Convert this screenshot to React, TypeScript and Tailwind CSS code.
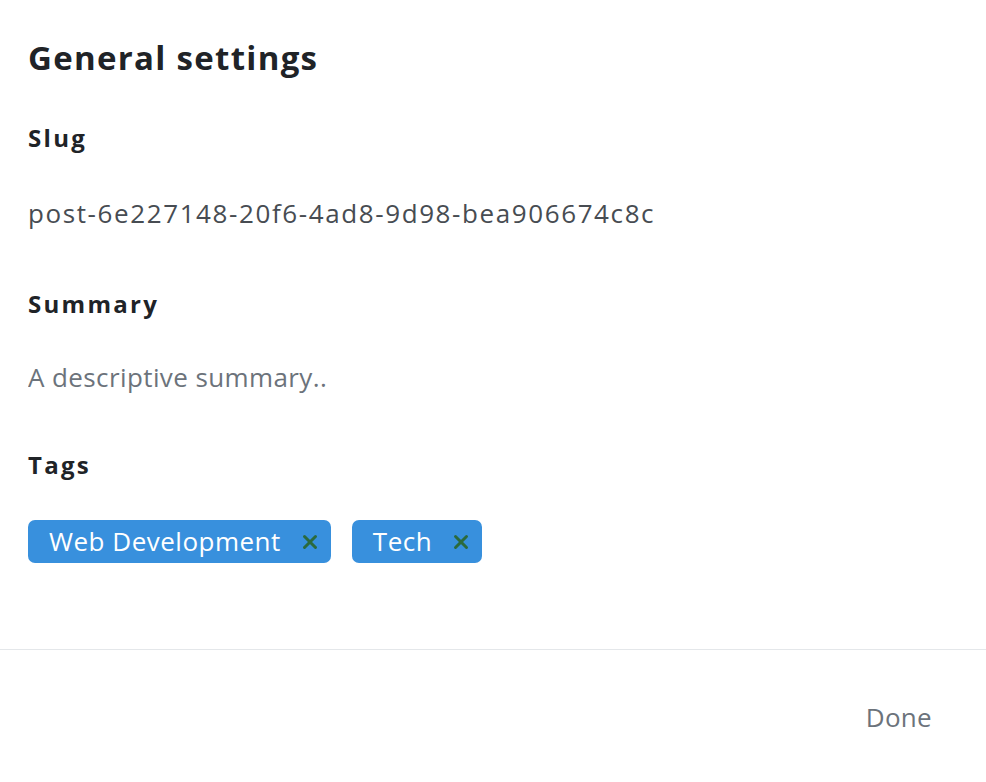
import { X } from "lucide-react";

const tags = ["Web Development", "Tech"];

const Label = ({ children, className }: { children: string; className: string }) => (
  <h3 className={`text-[24px] leading-[32px] font-bold tracking-[2.3px] text-[#202327] ${className}`}>
    {children}
  </h3>
);

const App = () => {
  return (
    <div className="w-full min-h-screen bg-white font-['Open_Sans',sans-serif]">
      <div className="px-[28px] pt-[38px]">
        <h1 className="text-[33px] leading-[40px] font-bold tracking-[1.3px] text-[#202327]">
          General settings
        </h1>

        <Label className="mt-[44px]">Slug</Label>
        <p className="mt-[43px] text-[26px] leading-[32px] tracking-[1.6px] text-[#474c52]">
          post-6e227148-20f6-4ad8-9d98-bea906674c8c
        </p>

        <Label className="mt-[59px]">Summary</Label>
        <input
          type="text"
          placeholder="A descriptive summary.."
          className="mt-[41px] block w-full h-[32px] text-[26px] leading-[32px] tracking-[0.4px] outline-none placeholder:text-[#6c737b]"
        />

        <Label className="mt-[56px]">Tags</Label>
        <div className="mt-[39px] flex gap-[21px]">
          {tags.map((tag) => (
            <span
              key={tag}
              className="h-[43px] flex items-center rounded-[7px] bg-[#3890dd] pl-[21px] pr-[10px] text-[26px] tracking-[0.5px] text-white"
            >
              {tag}
              <X className="ml-[18px] w-[22px] h-[22px] text-[#2b6a3d]" strokeWidth={3.2} />
            </span>
          ))}
        </div>
      </div>

      <div className="mt-[86px] border-t border-[#e4e7ea]" />
      <div className="flex justify-end pr-[54px] pt-[51px]">
        <button className="text-[26px] leading-[32px] tracking-[0.3px] text-[#6c737b]">Done</button>
      </div>
    </div>
  );
};

export default App;
